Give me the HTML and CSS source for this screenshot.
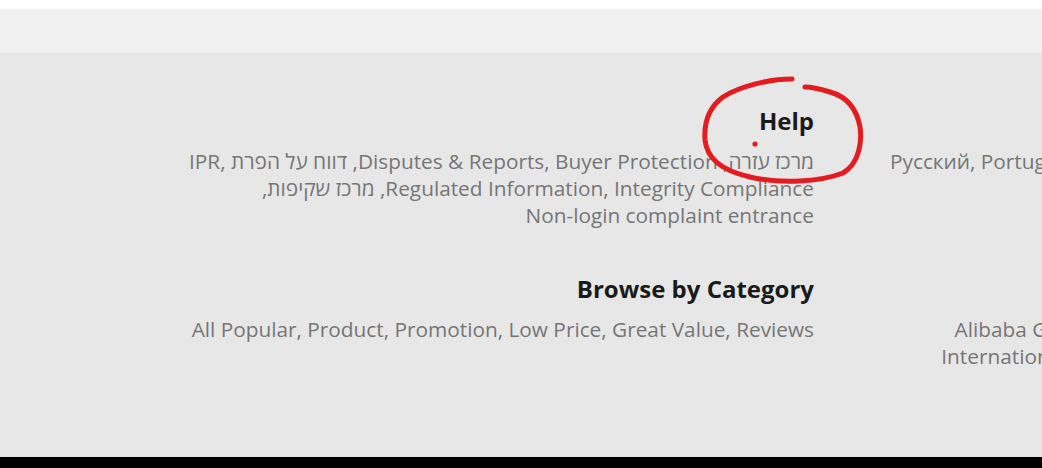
FILE: index.html
```html
<!DOCTYPE html>
<html lang="he">
<head>
<meta charset="utf-8">
<link rel="stylesheet" href="styles.css">
</head>
<body>
<div class="page">
  <div class="top-gap"></div>
  <div class="top-bar"></div>
  <main class="footer-links">
    <section class="col col-left" dir="rtl">
      <h3 class="heading">Help</h3>
      <p class="links">מרכז עזרה, Disputes &amp; Reports, Buyer Protection, דווח על הפרת IPR, Regulated Information, Integrity Compliance, מרכז שקיפות, <span class="nobr">Non-login</span> complaint entrance</p>
    </section>
    <section class="col col-right" dir="rtl">
      <h3 class="heading">Multi-Language Sites</h3>
      <p class="links"><span class="line">Русский, Português, Español, Français, Deutsch, Italiano</span></p>
    </section>
    <section class="col col-left" dir="rtl">
      <h3 class="heading">Browse by Category</h3>
      <p class="links">All Popular, Product, Promotion, Low Price, Great Value, Reviews</p>
    </section>
    <section class="col col-right" dir="rtl">
      <h3 class="heading">Alibaba Group</h3>
      <p class="links"><span class="line">Alibaba Group Website, AliExpress, Ele.me, Alipay</span><span class="line">International, AliTelecom, DingTalk, Alimama, 1688</span></p>
    </section>
  </main>
  <div class="bottom-bar"></div>
  <svg class="annotation" viewBox="0 0 1042 468" width="1042" height="468" aria-hidden="true">
    <path d="M792,79 C770,79 740,86 723,97 C708,108 704,125 705,140 C707,158 720,170 750,177 C780,184 820,182 843,173 C860,163 862,140 860,127 C857,110 848,97 830,92 C820,89 810,87 805,87" fill="none" stroke="#e41b1f" stroke-width="5" stroke-linecap="round" stroke-linejoin="round"/>
    <circle cx="755" cy="144" r="2.6" fill="#e41b1f"/>
  </svg>
</div>
</body>
</html>
```

FILE: styles.css
```css
html, body {
  margin: 0;
  padding: 0;
  background: #ffffff;
  overflow: hidden;
}

.page {
  position: relative;
  width: 1042px;
  height: 468px;
  overflow: hidden;
  font-family: "Open Sans", "Noto Sans", "DejaVu Sans", sans-serif;
}

.top-gap {
  height: 9px;
  background: #ffffff;
}

.top-bar {
  height: 44px;
  background: #f1f1f1;
  border-bottom: 1px solid #e3e3e3;
}

.footer-links {
  height: 403px;
  box-sizing: border-box;
  background: #e7e7e7;
  padding: 51px 0 0 176px;
  display: grid;
  grid-template-columns: 638px max-content;
  grid-template-rows: auto auto;
  column-gap: 76px;
  row-gap: 44px;
  align-content: start;
}

.col {
  text-align: right;
}

.heading {
  margin: 0 0 12px 0;
  font-size: 24px;
  line-height: 31px;
  font-weight: 700;
  color: #1a1a1a;
}

.links {
  margin: 0;
  font-size: 20.8px;
  line-height: 27px;
  color: #767676;
}

.nobr {
  white-space: nowrap;
}

.col-right .line {
  display: block;
  white-space: nowrap;
}

.col-right .heading {
  white-space: nowrap;
}

.bottom-bar {
  height: 11px;
  background: #000000;
}

.annotation {
  position: absolute;
  left: 0;
  top: 0;
  pointer-events: none;
}
```
